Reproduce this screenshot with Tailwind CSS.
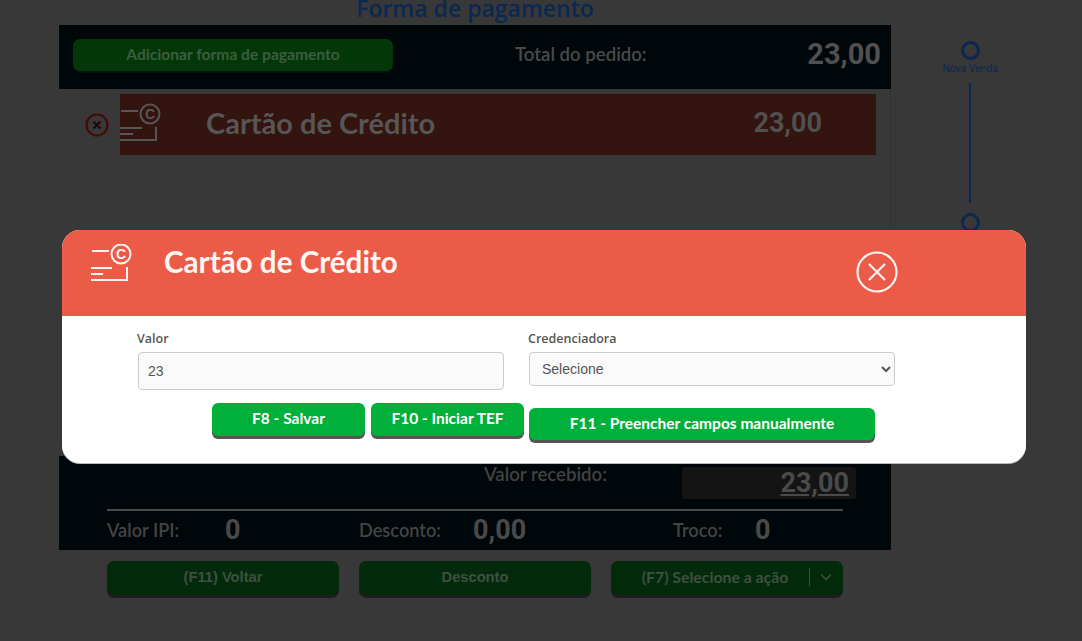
<!DOCTYPE html>
<html lang="en">
<head>
    <meta charset="UTF-8">
    <meta name="viewport" content="width=device-width, initial-scale=1.0">
    <title>Forma de pagamento</title>
    <script src="https://cdn.jsdelivr.net/npm/@tailwindcss/browser@4"></script>
</head>
<body class="bg-[#383838] font-['Lato','Open_Sans',sans-serif]">
    <div class="relative w-[1082px] h-[641px] overflow-hidden">

        <!-- page behind the modal -->
        <div class="flex pl-[59px]">
            <div class="w-[832px] shrink-0">
                <h2 class="h-[25px] -mt-[7px] text-center text-[23px] leading-[30px] font-semibold text-[#0a2850] font-['Open_Sans',sans-serif]">Forma de pagamento</h2>

                <div class="h-[64px] mt-[7px] bg-[#00070b] flex items-center pl-[14px] pr-[10px] pb-[4px]">
                    <button class="w-[320px] h-[32px] rounded-[7px] bg-[#023808] text-[#3f5c3f] text-[15.6px] font-bold shadow-[0_2px_0_#01130a]">Adicionar forma de pagamento</button>
                    <span class="ml-[122px] text-[18.6px] font-semibold text-[#4a4a4a]">Total do pedido:</span>
                    <span class="ml-auto text-[29px] font-bold text-[#505050] font-['Roboto',sans-serif]">23,00</span>
                </div>

                <div class="h-[367px] border-r border-[#333] pt-[5px] pr-[14px] flex items-start">
                    <div class="w-[61px] h-[61px] flex items-center justify-end pr-[11px]">
                        <svg width="24" height="24" viewBox="0 0 24 24" fill="none" stroke="#470a06" stroke-width="2.2"><circle cx="12" cy="12" r="10.5"/><path d="M8.5 8.5l7 7M15.5 8.5l-7 7" stroke="#1c0a08"/></svg>
                    </div>
                    <div class="flex-1 h-[61px] bg-[#33140e] flex items-center pb-[3px]">
                        <svg width="42" height="40" viewBox="0 0 42 40" fill="none" stroke="#565656" stroke-width="2" class="-ml-[1px]">
                            <path d="M2 8h17M1 25h22M1 31h13M1 37h36V24"/>
                            <circle cx="31" cy="11" r="9.5"/>
                            <text x="31" y="16" text-anchor="middle" font-size="14" font-weight="700" fill="#565656" stroke="none" font-family="Liberation Sans">C</text>
                        </svg>
                        <span class="ml-[45px] text-[29px] font-bold text-[#565656]">Cartão de Crédito</span>
                        <span class="ml-auto mr-[54px] text-[27px] font-bold text-[#505050] font-['Roboto',sans-serif]">23,00</span>
                    </div>
                </div>

                <div class="h-[94px] bg-[#00070b] px-[48px] relative">
                    <div class="h-[53px] flex items-start">
                        <span class="ml-[377px] mt-[6px] text-[18.6px] leading-[24px] font-semibold text-[#424242]">Valor recebido:</span>
                        <span class="ml-auto mt-[11px] mr-[-13px] w-[174px] h-[32px] rounded-[3px] bg-[#141414] text-right pr-[7px] text-[27px] leading-[32px] font-bold underline text-[#4a4a4a] font-['Roboto',sans-serif]">23,00</span>
                    </div>
                    <div class="border-t-2 border-[#4a4a4a] flex items-center h-[40px] pt-[1px]">
                        <span class="w-[118px] text-[18.2px] font-semibold text-[#444]">Valor IPI:</span>
                        <span class="w-[134px] text-[27px] font-bold text-[#4a4a4a] font-['Roboto',sans-serif]">0</span>
                        <span class="w-[114px] text-[18.2px] font-semibold text-[#444]">Desconto:</span>
                        <span class="w-[200px] text-[27px] font-bold text-[#4a4a4a] font-['Roboto',sans-serif]">0,00</span>
                        <span class="w-[82px] text-[18.2px] font-semibold text-[#444]">Troco:</span>
                        <span class="text-[27px] font-bold text-[#4a4a4a] font-['Roboto',sans-serif]">0</span>
                    </div>
                </div>

                <div class="flex gap-[20px] px-[48px] mt-[11px]">
                    <button class="w-[232px] h-[34px] pb-[2px] rounded-[7px] bg-[#032a0a] text-[#3f5040] text-[14.7px] font-bold shadow-[0_3px_0_#1e1e1e] font-['Liberation_Sans',sans-serif]">(F11) Voltar</button>
                    <button class="w-[232px] h-[34px] pb-[2px] rounded-[7px] bg-[#032a0a] text-[#3f5040] text-[14.7px] font-bold shadow-[0_3px_0_#1e1e1e] font-['Liberation_Sans',sans-serif]">Desconto</button>
                    <div class="w-[232px] h-[34px] pb-[2px] rounded-[7px] bg-[#032a0a] text-[#3f5040] text-[15.8px] font-bold shadow-[0_3px_0_#1e1e1e] flex items-center">
                        <span class="w-[198px] text-center pl-[10px] whitespace-nowrap">(F7) Selecione a ação</span>
                        <span class="w-px h-[18px] bg-[#3f5040]"></span>
                        <svg class="ml-[10px]" width="12" height="8" viewBox="0 0 12 8" fill="none" stroke="#3f5040" stroke-width="1.5"><path d="M1 1.5l5 5 5-5"/></svg>
                    </div>
                </div>
            </div>

            <!-- stepper -->
            <div class="w-[158px] pt-[41px] flex flex-col items-center">
                <span class="block w-[19px] h-[19px] rounded-full border-[3px] border-[#0a2850]"></span>
                <span class="mt-[1px] text-[10px] leading-[14px] text-[#0a2850] tracking-[-0.2px] font-['Inter',sans-serif]">Nova Venda</span>
                <span class="block w-[2px] h-[120px] mt-[8px] bg-[#0a2850]"></span>
                <span class="block w-[19px] h-[19px] mt-[10px] rounded-full border-[3px] border-[#0a2850]"></span>
            </div>
        </div>

        <!-- modal -->
        <div class="absolute left-[62px] top-[230px] w-[964px] h-[233px] rounded-[18px] bg-white overflow-hidden shadow-[0_1px_0_#bbb]">
            <div class="h-[86px] bg-[#ec5b48] flex items-start pl-[28px]">
                <svg class="mt-[14px]" width="42" height="40" viewBox="0 0 42 40" fill="none" stroke="#fdf3f0" stroke-width="2">
                    <path d="M2 7h17M1 24h21M1 30h12M1 36h36V23"/>
                    <circle cx="31" cy="10" r="9.5"/>
                    <text x="31" y="15" text-anchor="middle" font-size="14" font-weight="700" fill="#fdf3f0" stroke="none" font-family="Liberation Sans">C</text>
                </svg>
                <h3 class="ml-[32px] mt-[13px] text-[29.6px] leading-[38px] font-bold text-[#fdf6f3]">Cartão de Crédito</h3>
                <svg class="ml-auto mr-[128px] mt-[21px]" width="42" height="42" viewBox="0 0 42 42" fill="none" stroke="#fdf3f0" stroke-width="2.2"><circle cx="21" cy="21" r="19.5"/><path d="M13 13l16 16M29 13L13 29"/></svg>
            </div>
            <div class="pl-[75px] pt-[15px]">
                <div class="flex">
                    <div class="w-[391px]">
                        <label class="block text-[12.5px] leading-[16px] font-semibold text-[#555] font-['Open_Sans',sans-serif]">Valor</label>
                        <input type="text" value="23" class="block mt-[5px] ml-px w-[366px] h-[38px] px-[9px] rounded-[4px] border border-[#ccc] bg-[#fafafa] text-[14px] text-[#555] font-['Liberation_Sans',sans-serif]">
                    </div>
                    <div>
                        <label class="block text-[12.5px] leading-[16px] font-semibold text-[#555] font-['Open_Sans',sans-serif]">Credenciadora</label>
                        <select class="block mt-[5px] ml-px w-[366px] h-[34px] pl-[8px] rounded-[4px] border border-[#ccc] bg-[#fafafa] text-[14px] text-[#555] font-['Liberation_Sans',sans-serif]">
                            <option>Selecione</option>
                        </select>
                    </div>
                </div>
                <div class="flex items-start ml-[75px] mt-[13px] text-white text-[15.5px] font-bold">
                    <button class="w-[153px] h-[33px] pb-[1px] rounded-[6px] bg-[#00b03a] shadow-[0_3px_0_#555]">F8 - Salvar</button>
                    <button class="ml-[6px] w-[153px] h-[33px] pb-[1px] rounded-[6px] bg-[#00b03a] shadow-[0_3px_0_#555]">F10 - Iniciar TEF</button>
                    <button class="ml-[5px] mt-[5px] w-[346px] h-[32px] rounded-[6px] bg-[#00b03a] shadow-[0_3px_0_#555]">F11 - Preencher campos manualmente</button>
                </div>
            </div>
        </div>
    </div>
</body>
</html>
